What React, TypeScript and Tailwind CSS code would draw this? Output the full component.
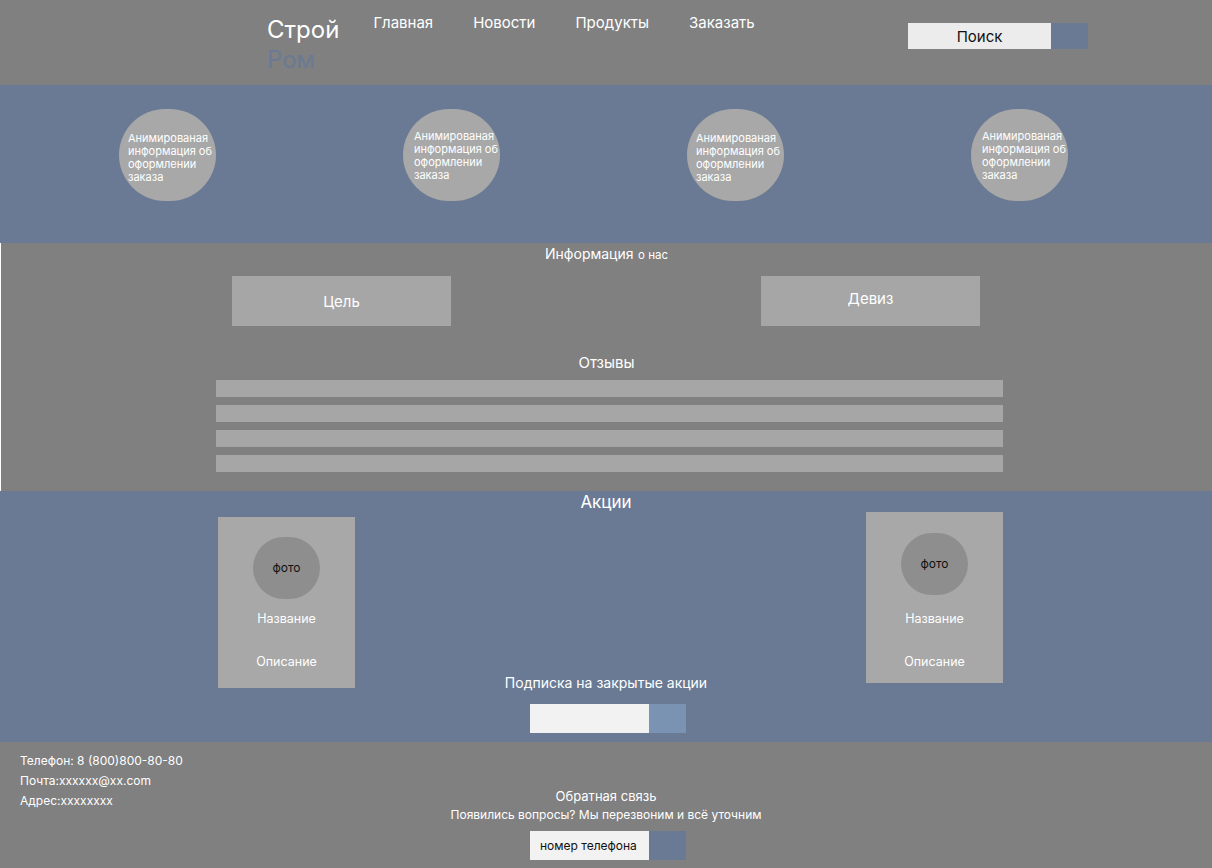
import React from "react";

const circles = [0, 1, 2, 3];
const reviews = [0, 1, 2, 3];

function PromoCard({ tall }: { tall?: boolean }) {
  return (
    <div
      className={`flex h-[171px] w-[137px] flex-col items-center bg-[#a8a8a8] ${
        tall ? "pt-[21px]" : "pt-[20px]"
      }`}
    >
      <div className="flex h-[62px] w-[67px] items-center justify-center rounded-full bg-[#8e8e8e] text-[12px] text-[#111]">
        фото
      </div>
      <div
        className={`text-[12.5px] leading-[18px] text-white ${
          tall ? "mt-[15px]" : "mt-[11px]"
        }`}
      >
        Название
      </div>
      <div className="mt-[25px] text-[12.5px] leading-[18px] text-white">
        Описание
      </div>
    </div>
  );
}

export default function App() {
  return (
    <div className="min-h-[868px] w-[1212px] bg-[#808080] font-['Inter',sans-serif]">
      {/* header */}
      <header className="flex h-[85px] bg-[#808080]">
        <div className="ml-[267px] mt-[15px] flex flex-col text-[24px] leading-[29px]">
          <span className="text-white">Строй</span>
          <span className="mt-[1px] text-[#6a7a94]">Ром</span>
        </div>
        <nav className="ml-[34px] mt-[12px] flex h-[20px] gap-[40px] text-[15px] text-white">
          <span>Главная</span>
          <span>Новости</span>
          <span>Продукты</span>
          <span>Заказать</span>
        </nav>
        <div className="ml-auto mr-[124px] mt-[23px] flex h-[26px]">
          <div className="flex w-[143px] items-center justify-center bg-[#ececec] pt-[2px] text-[15px] text-[#111]">
            Поиск
          </div>
          <div className="w-[37px] bg-[#6a7a94]" />
        </div>
      </header>

      {/* animated info */}
      <section className="flex h-[158px] items-start gap-[187px] bg-[#6a7a94] pl-[119px] pt-[24px]">
        {circles.map((i) => (
          <div
            key={i}
            className={`flex h-[92px] w-[97px] shrink-0 flex-col justify-center rounded-full bg-[#a8a8a8] text-[11px] leading-[13px] text-white ${
              i % 2 === 0 ? "pl-[9px] pt-[5px]" : "pl-[11px] pt-[1px]"
            }`}
          >
            <span className="whitespace-nowrap">Анимированая</span>
            <span className="whitespace-nowrap">информация об</span>
            <span className="whitespace-nowrap">оформлении</span>
            <span className="whitespace-nowrap">заказа</span>
          </div>
        ))}
      </section>

      {/* about */}
      <section className="flex h-[248px] flex-col border-l border-white bg-[#808080]">
        <div className="text-center leading-[20px] text-white">
          <span className="text-[14px]">Информация</span>{" "}
          <span className="text-[11.5px]">о нас</span>
        </div>
        <div className="mt-[11px] flex gap-[310px] pl-[231px]">
          <div className="flex h-[50px] w-[219px] items-center justify-center bg-[#a6a6a6] pt-[2px] text-[15px] text-white">
            Цель
          </div>
          <div className="flex h-[50px] w-[219px] items-center justify-center bg-[#a6a6a6] pb-[4px] text-[15px] text-white">
            Девиз
          </div>
        </div>
        <div className="mt-[27px] text-center text-[15px] leading-[20px] text-white">
          Отзывы
        </div>
        <div className="mt-[7px] flex flex-col gap-[8px] pl-[215px]">
          {reviews.map((i) => (
            <div key={i} className="h-[17px] w-[787px] bg-[#a6a6a6]" />
          ))}
        </div>
      </section>

      {/* promos */}
      <section className="flex h-[251px] bg-[#6a7a94] pl-[218px]">
        <div className="mt-[26px]">
          <PromoCard />
        </div>
        <div className="flex w-[511px] flex-col items-center pr-[9px] text-white">
          <div className="text-[17px] leading-[22px]">Акции</div>
          <div className="mt-auto text-[14px] leading-[20px]">
            Подписка на закрытые акции
          </div>
          <div className="mb-[9px] mt-[11px] flex h-[29px] pl-[4px]">
            <div className="w-[119px] bg-[#f2f2f2]" />
            <div className="w-[37px] bg-[#7a93b3]" />
          </div>
        </div>
        <div className="mt-[21px]">
          <PromoCard tall />
        </div>
      </section>

      {/* footer */}
      <footer className="flex h-[126px] bg-[#808080] text-white">
        <div className="ml-[20px] mt-[9px] flex w-[200px] flex-col text-[12px] leading-[20px]">
          <span>Телефон: 8 (800)800-80-80</span>
          <span>Почта:xxxxxx@xx.com</span>
          <span>Адрес:xxxxxxxx</span>
        </div>
        <div className="ml-[186px] mt-[46px] flex w-[400px] flex-col items-center">
          <span className="text-[13px] leading-[17px]">Обратная связь</span>
          <span className="mt-[2px] text-[12px] leading-[16px]">
            Появились вопросы? Мы перезвоним и всё уточним
          </span>
          <div className="mt-[8px] flex h-[29px] pl-[4px]">
            <div className="flex w-[119px] items-center bg-[#f2f2f2] pl-[10px] text-[12px] text-[#111]">
              номер телефона
            </div>
            <div className="w-[37px] bg-[#6a7a94]" />
          </div>
        </div>
      </footer>
    </div>
  );
}
